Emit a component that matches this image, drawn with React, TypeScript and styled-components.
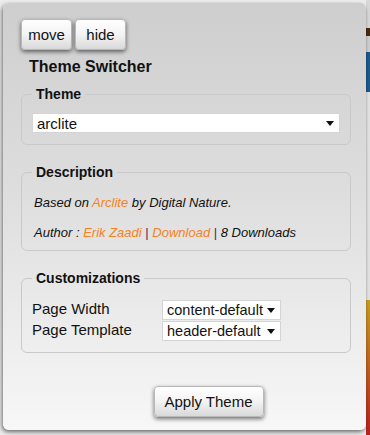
import React, { FC, ReactNode } from 'react';
import styled, { createGlobalStyle } from 'styled-components';

const GlobalStyle = createGlobalStyle`
  html, body {
    margin: 0;
    padding: 0;
  }
  body {
    width: 370px;
    height: 435px;
    overflow: hidden;
    font-family: 'Liberation Sans', Arial, sans-serif;
    background-color: #ececec;
    background-image:
      linear-gradient(to bottom, #d8d8d8 0, #d8d8d8 28px, #4a2a10 28px, #4a2a10 36px,
        #cfcfcf 36px, #cfcfcf 52px, #1d5a8c 52px, #1d5a8c 92px, #e4e4e4 92px, #e4e4e4 300px,
        #c8a020 300px, #b82020 435px);
    background-repeat: no-repeat;
    background-size: 4px 100%;
    background-position: right top;
  }
`;

const Panel = styled.div`
  box-sizing: border-box;
  width: 363px;
  height: 427px;
  margin: 3px 0 0 3px;
  padding: 16px 15px 0 18px;
  border-radius: 6px;
  background: linear-gradient(to bottom, #cecece 0%, #dedede 45%, #f7f7f7 100%);
  box-shadow: -1px 2px 4px rgba(0, 0, 0, 0.55);
  display: flex;
  flex-direction: column;
`;

const Toolbar = styled.div`
  display: flex;
  gap: 3px;
`;

const Button = styled.button<{ $wide?: boolean }>`
  box-sizing: border-box;
  height: 31px;
  min-width: ${(p) => (p.$wide ? '110px' : '51px')};
  padding: 0 6px;
  font-family: 'Liberation Sans', Arial, sans-serif;
  font-size: 15px;
  color: #111;
  border: 1px solid #b8b8b8;
  border-radius: 4px;
  background: linear-gradient(to bottom, #ffffff 0%, #f3f3f3 50%, #d9d9d9 100%);
  box-shadow: 0 2px 4px rgba(0, 0, 0, 0.55);
  cursor: pointer;
`;

const Title = styled.h2`
  margin: 8px 0 10px 8px;
  font-size: 16px;
  line-height: 18px;
  font-weight: bold;
  color: #111;
`;

const Group = styled.fieldset<{ $pad: number }>`
  margin: 0 0 19px 0;
  padding: ${(p) => p.$pad}px 10px;
  border: 1px solid #c9c9c9;
  border-radius: 6px;
`;

const Legend = styled.legend`
  padding: 0 4px;
  margin-left: 0;
  font-size: 14px;
  line-height: 16px;
  font-weight: bold;
  color: #111;
`;

const SelectWrap = styled.div<{ $width: string }>`
  position: relative;
  width: ${(p) => p.$width};
  height: 20px;
`;

const Select = styled.select<{ $size: number }>`
  appearance: none;
  box-sizing: border-box;
  width: 100%;
  height: 100%;
  margin: 0;
  padding: 0 14px 0 4px;
  border: 1px solid #d4d4d4;
  border-radius: 0;
  background: #fff;
  font-family: 'Liberation Sans', Arial, sans-serif;
  font-size: ${(p) => p.$size}px;
  color: #111;
  outline: none;
`;

const Arrow = styled.svg`
  position: absolute;
  right: 6px;
  top: 8px;
  pointer-events: none;
`;

const Dropdown: FC<{ value: string; width: string; size?: number }> = ({
  value,
  width,
  size = 15,
}) => (
  <SelectWrap $width={width}>
    <Select defaultValue={value} $size={size}>
      <option>{value}</option>
    </Select>
    <Arrow width="8" height="5" viewBox="0 0 8 5">
      <path d="M0 0 L8 0 L4 5 Z" fill="#111" />
    </Arrow>
  </SelectWrap>
);

const Line = styled.p`
  margin: 5px 0 0 2px;
  font-size: 13px;
  line-height: 15px;
  font-style: italic;
  color: #111;
  & + & {
    margin-top: 15px;
  }
`;

const Link = styled.a`
  color: #f58220;
  text-decoration: none;
`;

const Sep = styled.span`
  color: #5a1a5a;
  font-style: normal;
`;

const Rows = styled.div`
  display: grid;
  grid-template-columns: 130px auto;
  row-gap: 1px;
  margin-top: 3px;
`;

const Label = styled.span`
  font-size: 15px;
  line-height: 17px;
  color: #111;
`;

const Footer = styled.div`
  display: flex;
  justify-content: center;
  padding-left: 45px;
  margin-top: 14px;
`;

const Section: FC<{ title: string; pad?: number; children: ReactNode }> = ({
  title,
  pad = 11,
  children,
}) => (
  <Group $pad={pad}>
    <Legend>{title}</Legend>
    {children}
  </Group>
);

const App: FC = () => (
  <>
    <GlobalStyle />
    <Panel>
      <Toolbar>
        <Button>move</Button>
        <Button>hide</Button>
      </Toolbar>
      <Title>Theme Switcher</Title>
      <Section title="Theme">
        <Dropdown value="arclite" width="308px" />
      </Section>
      <Section title="Description" pad={10}>
        <Line>
          Based on <Link>Arclite</Link> by Digital Nature.
        </Line>
        <Line>
          Author : <Link>Erik Zaadi</Link> <Sep>|</Sep> <Link>Download</Link> <Sep>|</Sep> 8 Downloads
        </Line>
      </Section>
      <Section title="Customizations">
        <Rows>
          <Label>Page Width</Label>
          <Dropdown value="content-default" width="119px" size={14.5} />
          <Label>Page Template</Label>
          <Dropdown value="header-default" width="119px" size={14.5} />
        </Rows>
      </Section>
      <Footer>
        <Button $wide>Apply Theme</Button>
      </Footer>
    </Panel>
  </>
);

export default App;
